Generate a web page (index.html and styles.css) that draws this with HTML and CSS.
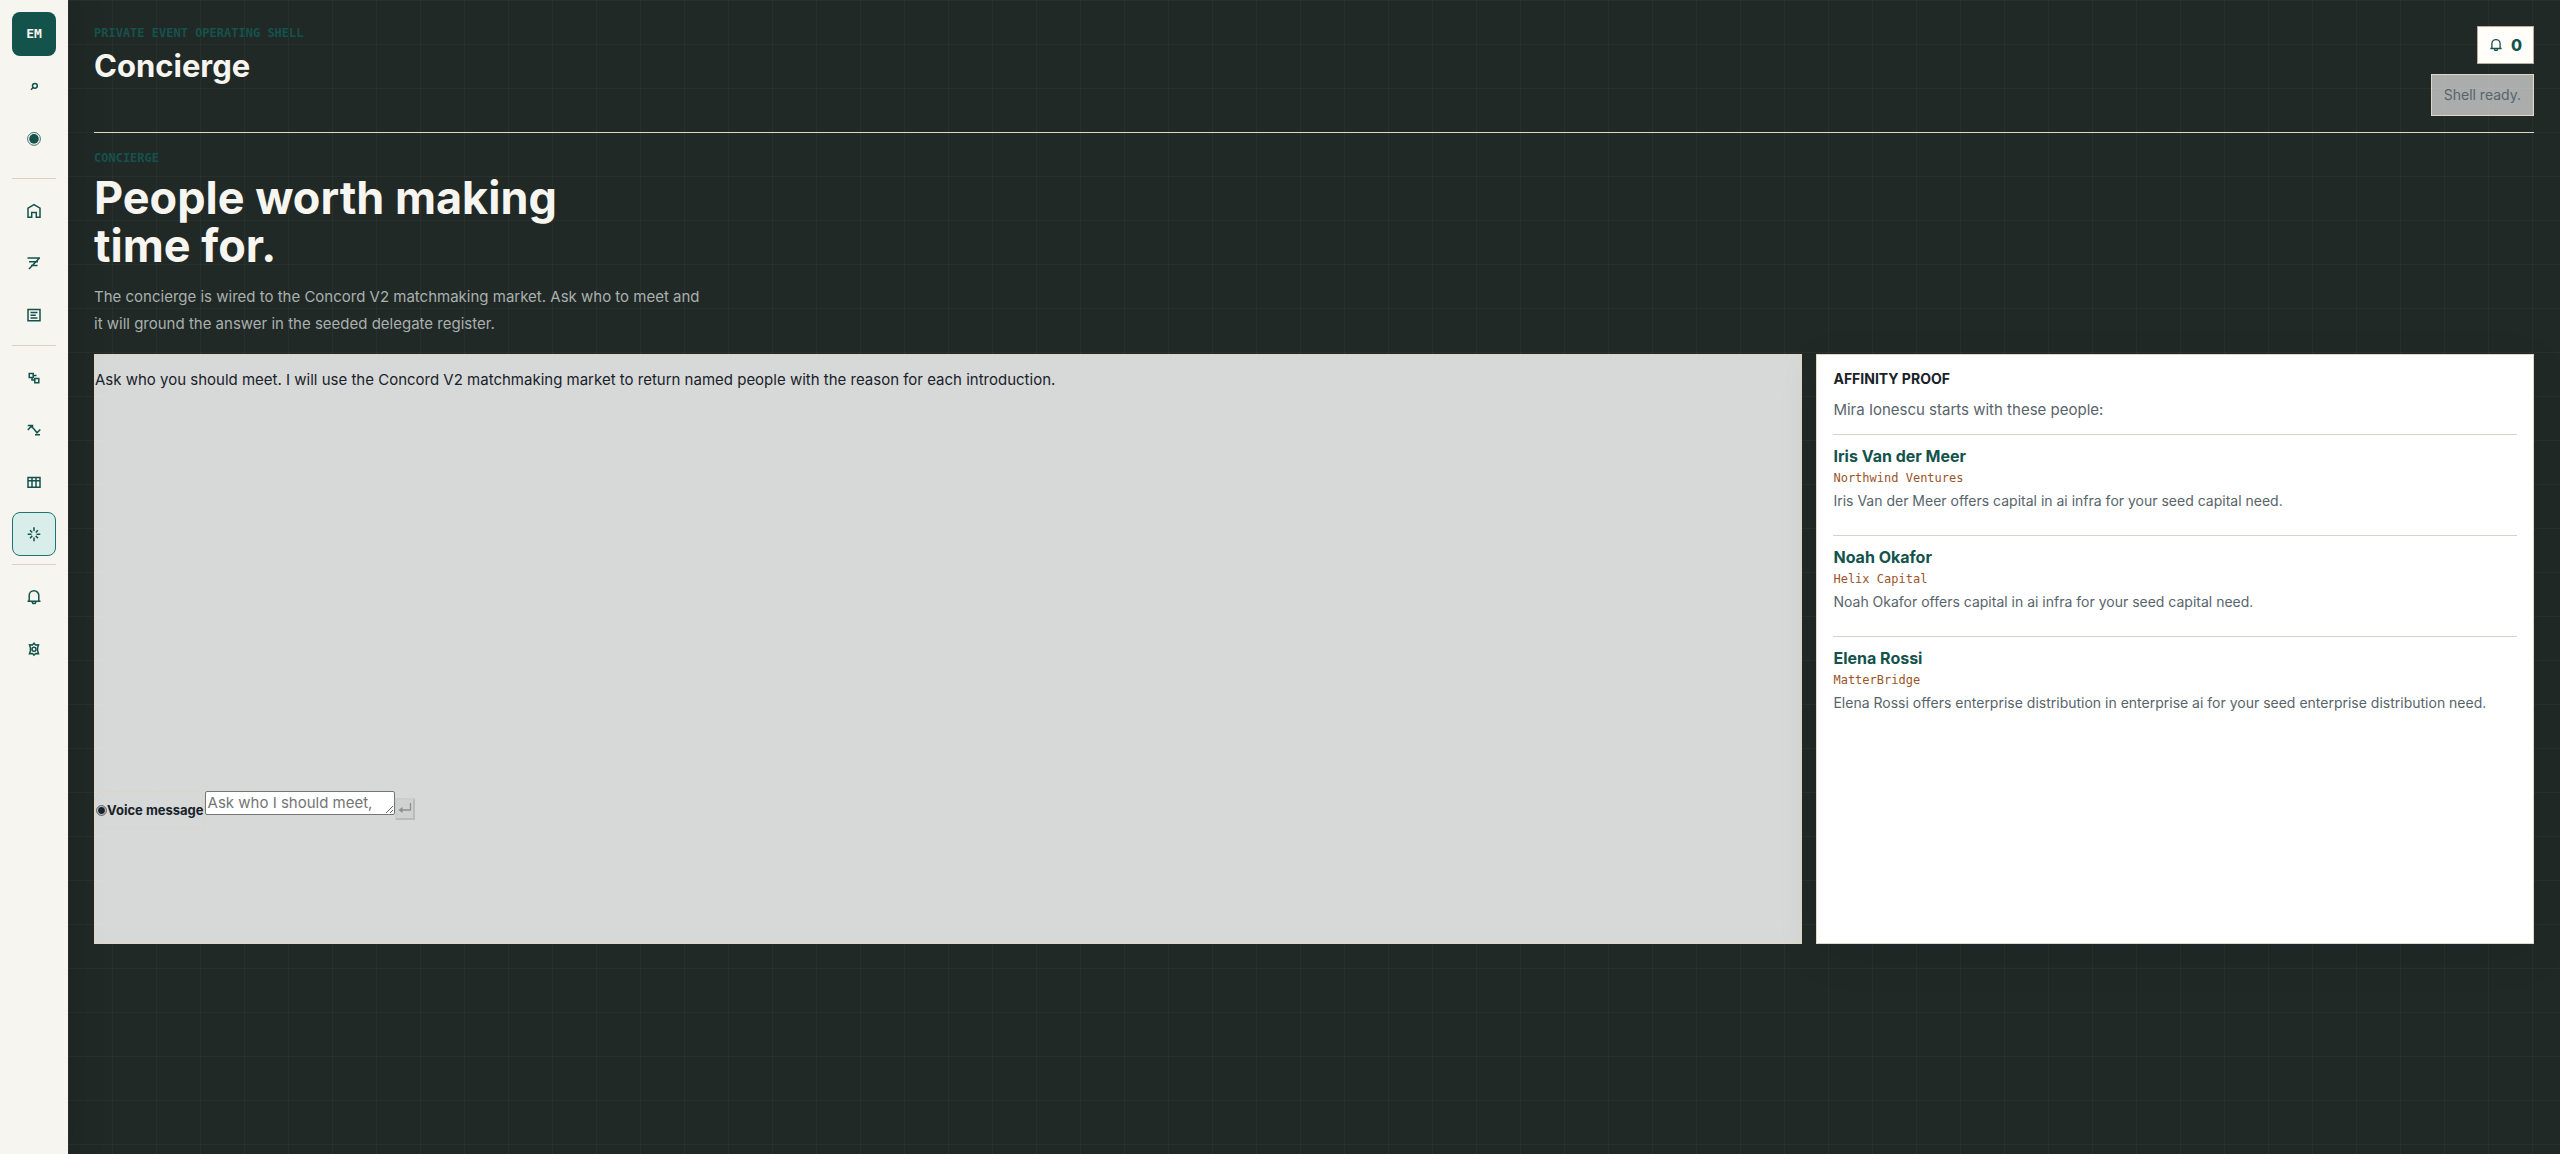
FILE: index.html
```html
<!DOCTYPE html>
<html lang="en">
<head>
<meta charset="utf-8">
<meta name="viewport" content="width=device-width, initial-scale=1">
<title>Concierge</title>
<link rel="stylesheet" href="styles.css">
</head>
<body>
<div class="shell">
  <nav class="rail" aria-label="Primary">
    <div class="rail-group rail-group-top">
      <a class="rail-item brand" href="#">EM</a>
      <button class="rail-item" type="button" aria-label="Search">
        <svg class="icon" viewBox="0 0 16 16"><circle cx="8.9" cy="7.8" r="2.4"/><path d="M7.2 9.500 5 11.700"/></svg>
      </button>
      <button class="rail-item" type="button" aria-label="Record">
        <svg class="icon" viewBox="0 0 16 16"><circle class="thin" cx="8" cy="8.900" r="6.400"/><circle class="solid" cx="8" cy="8.900" r="4.800"/></svg>
      </button>
    </div>
    <div class="rail-group">
      <a class="rail-item" href="#" aria-label="Home">
        <svg class="icon" viewBox="0 0 16 16"><path d="M2 14.300V5.200L8 1.700l6 3.500v9.100h-3.700V9.500H5.700v4.800z"/></svg>
      </a>
      <a class="rail-item" href="#" aria-label="Filters">
        <svg class="icon" viewBox="0 0 16 16"><path d="M1.500 3H14M3 6.700h9M5 10.500h6.500M13 3.500 3 14"/></svg>
      </a>
      <a class="rail-item" href="#" aria-label="Agenda">
        <svg class="icon" viewBox="0 0 16 16"><path d="M2 2.500h12v11.300H2zM4.500 5.500h7M4.500 8.200h5.300M4.500 10.900h7"/></svg>
      </a>
    </div>
    <div class="rail-group">
      <a class="rail-item" href="#" aria-label="Connections">
        <svg class="icon" viewBox="0 0 16 16"><path d="M3.200 3.500h4v4h-4zM8.800 8.500h4v4.300h-4zM7.200 5.500h3.300M6 7.500V10h2.800"/></svg>
      </a>
      <a class="rail-item" href="#" aria-label="Market">
        <svg class="icon" viewBox="0 0 16 16"><path d="M1.800 8 5 4.500l2.500 2L11 10.800 14.300 7.500M1.800 3.500h4.700v2.700M9 12.800h5"/></svg>
      </a>
      <a class="rail-item" href="#" aria-label="Register">
        <svg class="icon" viewBox="0 0 16 16"><path d="M2 3.500h12v9.700H2zM2 6.700h12M6 3.500v9.700M10 3.500v9.700"/></svg>
      </a>
      <a class="rail-item is-active" href="#" aria-label="Concierge" aria-current="page">
        <svg class="icon" viewBox="0 0 16 16"><path d="M8 1.200v3.800M8 11.400v3.800M1.700 8.200h3.800M10.500 8.200h3.800M4 4.200l2.300 2.300M9.700 9.900l2.300 2.300M12 4.200 9.700 6.500M6.300 9.900 4 12.200"/></svg>
      </a>
    </div>
    <div class="rail-group">
      <a class="rail-item" href="#" aria-label="Notifications">
        <svg class="icon" viewBox="0 0 16 16"><path d="M1.500 12.300h13M3.200 12.300V6.500a4.800 4.800 0 0 1 9.600 0v5.800M6.200 12.800a1.800 1.800 0 0 0 3.600 0"/></svg>
      </a>
      <a class="rail-item" href="#" aria-label="Settings">
        <svg class="icon" viewBox="0 0 16 16"><path d="M8 2.200 9.500 4l3-.2-.9 3v2.800l.9 3-3-.2L8 14.200l-1.500-1.800-3 .2.900-3V6.800l-.9-3 3 .2z"/><circle cx="8" cy="8.200" r="2"/></svg>
      </a>
    </div>
  </nav>

  <main class="main">
    <header class="topbar">
      <div>
        <p class="eyebrow">Private event operating shell</p>
        <p class="page-title">Concierge</p>
      </div>
      <div class="topbar-side">
        <button class="alerts" type="button" aria-label="Notifications">
          <svg class="icon icon-small" viewBox="0 0 16 16"><path d="M1.500 12h13M3.300 12V6.500a4.700 4.700 0 0 1 9.400 0V12M6.200 12.500a1.800 1.800 0 0 0 3.600 0"/></svg>
          <span>0</span>
        </button>
        <div class="status" role="status">Shell ready.</div>
      </div>
    </header>

    <section class="intro">
      <p class="eyebrow">Concierge</p>
      <h1 class="headline">People worth making time for.</h1>
      <p class="lede">The concierge is wired to the Concord V2 matchmaking market. Ask who to meet and it will ground the answer in the seeded delegate register.</p>
    </section>

    <div class="workspace">
      <section class="chat" aria-label="Conversation">
        <p class="message">Ask who you should meet. I will use the Concord V2 matchmaking market to return named people with the reason for each introduction.</p>
        <form class="composer">
          <button class="voice" type="button">
            <svg class="voice-icon" viewBox="0 0 12 12"><circle class="ring" cx="6" cy="6" r="5.300"/><circle cx="6" cy="6" r="3.700"/></svg>Voice message</button>
          <textarea class="prompt" rows="1" aria-label="Message" placeholder="Ask who I should meet,"></textarea>
          <button class="send" type="submit" aria-label="Send" disabled>
            <svg class="send-icon" viewBox="0 0 14 14"><path d="M12.500 1v7H3"/><path class="head" d="M.5 8 4.500 5v6z"/></svg>
          </button>
        </form>
      </section>

      <aside class="proof">
        <h2 class="proof-title">Affinity proof</h2>
        <p class="proof-lead">Mira Ionescu starts with these people:</p>
        <article class="person">
          <h3 class="person-name">Iris Van der Meer</h3>
          <p class="person-org">Northwind Ventures</p>
          <p class="person-reason">Iris Van der Meer offers capital in ai infra for your seed capital need.</p>
        </article>
        <article class="person">
          <h3 class="person-name">Noah Okafor</h3>
          <p class="person-org">Helix Capital</p>
          <p class="person-reason">Noah Okafor offers capital in ai infra for your seed capital need.</p>
        </article>
        <article class="person">
          <h3 class="person-name">Elena Rossi</h3>
          <p class="person-org">MatterBridge</p>
          <p class="person-reason">Elena Rossi offers enterprise distribution in enterprise ai for your seed enterprise distribution need.</p>
        </article>
      </aside>
    </div>
  </main>
</div>
</body>
</html>
```

FILE: styles.css
```css
:root {
  --ink: #18222a;
  --paper: #f7f5f0;
  --teal: #14524c;
  --muted: #58646b;
  --line: #d6d4c6;
  --sand: #e0d6c4;
  --night: #212927;
  --grid: rgba(255, 255, 255, 0.03);
  --sans: Inter, "Liberation Sans", sans-serif;
  --mono: "DejaVu Sans Mono", "Liberation Mono", monospace;
}

* {
  box-sizing: border-box;
}

body,
h1,
h2,
h3,
p {
  margin: 0;
}

body {
  background: var(--night);
  color: var(--ink);
  font: 15px/20px var(--sans);
}

button,
textarea {
  font: inherit;
}

.shell {
  display: grid;
  grid-template-columns: 68px minmax(0, 1fr);
  min-height: 100vh;
}

/* Navigation rail */

.rail {
  display: flex;
  flex-direction: column;
  gap: 8px;
  padding: 12px;
  background: var(--paper);
  box-shadow: 8px 0 32px rgba(0, 0, 0, 0.12);
}

.rail-group {
  display: flex;
  flex-direction: column;
  gap: 8px;
  padding-top: 10px;
  border-top: 1px solid var(--line);
}

.rail-group-top {
  padding: 0 0 10px;
  border: 0;
}

.rail-item {
  display: grid;
  place-items: center;
  height: 44px;
  padding: 0;
  border: 1px solid transparent;
  border-radius: 8px;
  background: none;
  color: var(--teal);
  text-decoration: none;
}

.rail-item.brand {
  background: var(--teal);
  color: var(--paper);
  font: 700 13px/20px var(--mono);
}

.rail-item.is-active {
  border-color: #1f766e;
  background: #d9eeea;
}

.icon {
  display: block;
  width: 16px;
  height: 16px;
  fill: none;
  stroke: currentColor;
  stroke-width: 1.5;
}

.icon .thin {
  stroke-width: 0.8;
}

.icon .solid {
  fill: currentColor;
  stroke: none;
}

.icon-small {
  width: 14px;
  height: 14px;
}

/* Main column */

.main {
  padding: 26px;
  background-image:
    linear-gradient(var(--grid) 1px, transparent 1px),
    linear-gradient(90deg, var(--grid) 1px, transparent 1px);
  background-size: 44px 44px;
}

.topbar {
  display: flex;
  justify-content: space-between;
  padding-bottom: 16px;
  border-bottom: 1px solid var(--sand);
}

.eyebrow {
  color: var(--teal);
  font: 700 12px/14px var(--mono);
  text-transform: uppercase;
}

.page-title {
  margin-top: 8px;
  color: var(--paper);
  font-size: 31px;
  font-weight: 700;
  line-height: 36px;
}

.topbar-side {
  display: flex;
  flex-direction: column;
  align-items: flex-end;
  gap: 10px;
}

.alerts {
  display: flex;
  align-items: center;
  gap: 8px;
  height: 38px;
  padding: 0 11px;
  border: 1px solid #b9ae9b;
  background: #fffefb;
  color: var(--teal);
  font-size: 16px;
  font-weight: 800;
}

.status {
  padding: 10px 12px;
  border: 1px solid var(--sand);
  background: rgba(255, 255, 255, 0.62);
  color: var(--muted);
  font-size: 14px;
}

.intro {
  padding: 18px 0 17px;
}

.headline {
  max-width: 520px;
  margin-top: 9px;
  color: var(--paper);
  font-size: 45px;
  font-weight: 700;
  line-height: 48px;
}

.lede {
  max-width: 612px;
  margin-top: 13px;
  color: #a9b0ae;
  line-height: 27px;
}

.workspace {
  display: grid;
  grid-template-columns: 50fr 21fr;
  gap: 14px;
  min-height: 590px;
}

/* Conversation */

.chat {
  display: flex;
  flex-direction: column;
  justify-content: space-between;
  padding: 15px 0 114px;
  border: 1px solid var(--sand);
  background: rgba(255, 255, 255, 0.82);
}

.composer {
  display: flex;
  align-items: flex-start;
}

.voice {
  display: flex;
  align-items: center;
  height: 38px;
  padding: 0;
  border: 1px solid #dcd5c9;
  border-radius: 8px;
  background: none;
  color: var(--ink);
  font-size: 13px;
  font-weight: 700;
}

.voice-icon {
  width: 11px;
  height: 11px;
  fill: currentColor;
}

.voice-icon .ring {
  fill: none;
  stroke: currentColor;
  stroke-width: 0.8;
}

.prompt {
  width: 190px;
  height: 24px;
  padding: 1px 2px;
  border: 1px solid #767676;
  border-radius: 2px;
  background: #fff;
  line-height: 20px;
  overflow: hidden;
}

.prompt::placeholder {
  color: #757575;
}

.send {
  display: grid;
  place-items: center;
  width: 20px;
  height: 22px;
  margin-top: 7px;
  padding: 0;
  border: 2px solid;
  border-color: #cccecd #b9bbba #b9bbba #cccecd;
  background: #d0d2d1;
  color: #8b8e8d;
}

.send-icon {
  width: 14px;
  height: 14px;
  fill: none;
  stroke: currentColor;
  stroke-width: 1.3;
}

.send-icon .head {
  fill: currentColor;
  stroke: none;
}

/* Affinity proof */

.proof {
  padding: 14px 16px;
  border: 1px solid var(--sand);
  background: #fff;
  box-shadow: 0 12px 40px rgba(0, 0, 0, 0.08);
}

.proof-title {
  font-size: 14px;
  line-height: 20px;
  text-transform: uppercase;
}

.proof-lead {
  margin: 10px 0 13px;
  color: var(--muted);
  line-height: 22px;
}

.person {
  padding: 10px 0 22px;
  border-top: 1px solid var(--line);
}

.person-name {
  color: var(--teal);
  font-size: 16px;
  line-height: 22px;
}

.person-org {
  margin-top: 3px;
  color: #9a5528;
  font: 12px/16px var(--mono);
}

.person-reason {
  margin-top: 3px;
  color: var(--muted);
  font-size: 14px;
  line-height: 24px;
}
```
